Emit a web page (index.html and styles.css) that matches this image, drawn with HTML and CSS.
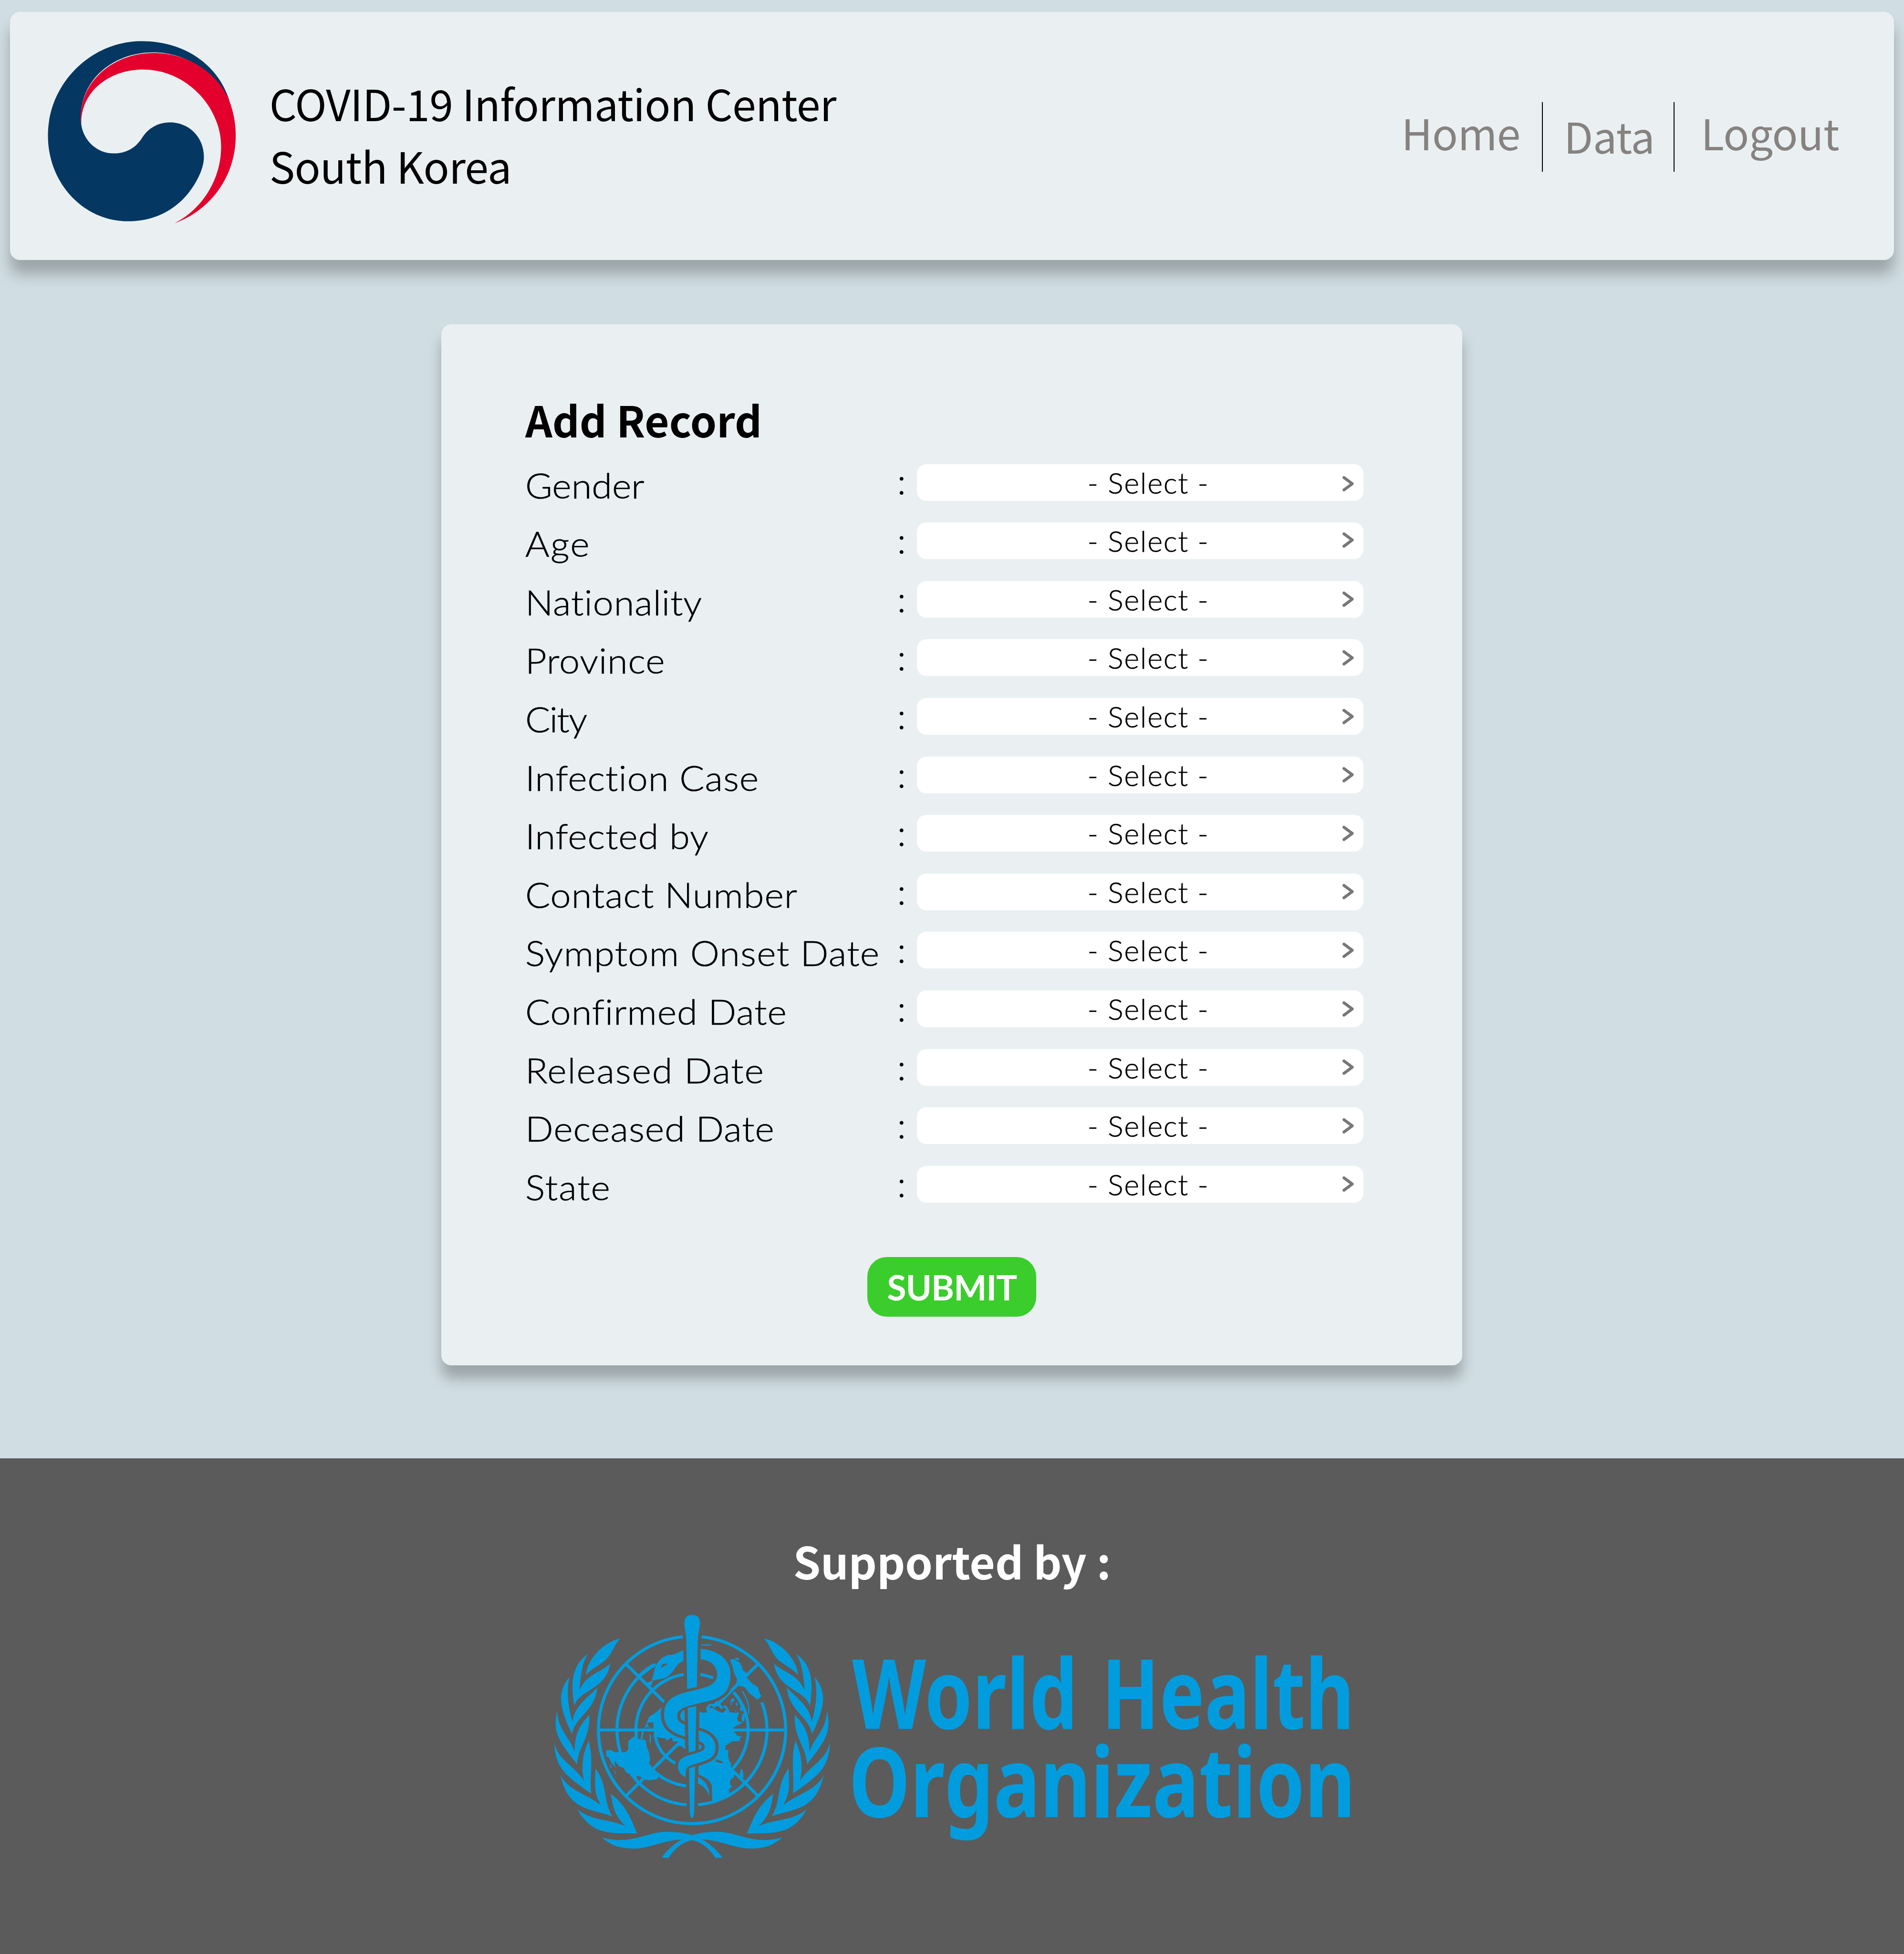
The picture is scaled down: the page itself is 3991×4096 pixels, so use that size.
FILE: index.html
```html
<!DOCTYPE html>
<html lang="en">
<head>
<meta charset="utf-8">
<title>COVID-19 Information Center South Korea</title>
<link rel="stylesheet" href="styles.css">
</head>
<body>
<header class="header">
  <svg class="crest" viewBox="0 0 1568 1568" preserveAspectRatio="none" aria-hidden="true">
    <path fill="#043762" d="M1418 545C1335 270 1085 95 775 95C400 95 89 420 89 810C89 1170 350 1459 675 1459C930 1459 1120 1310 1210 1080C1222 1045 1231 1010 1231 970C1231 820 1120 710 982 710C890 710 820 760 780 825C740 890 680 945 570 945C450 945 350 850 333 727C300 400 560 180 860 180C1100 180 1310 330 1418 545Z"/>
    <path fill="#e4002c" d="M333 727C297 430 545 184 865 184C1100 184 1310 320 1405 515C1440 600 1464 700 1464 810C1464 1110 1290 1370 1015 1475C1230 1360 1357 1130 1357 895C1357 590 1100 310 785 310C530 310 325 485 333 727Z"/>
  </svg>
  <h1 class="site-title">COVID-19 Information Center<br>South Korea</h1>
  <nav class="nav">
    <a class="nav-item nav-home">Home</a>
    <a class="nav-item nav-data">Data</a>
    <a class="nav-item nav-logout">Logout</a>
  </nav>
</header>

<main class="card">
  <h2 class="card-title">Add Record</h2>
  <div class="fields">
    <div class="field"><span class="label">Gender</span><span class="colon">:</span><div class="select">- Select -<svg class="chevron" viewBox="0 0 24 32"><path d="M3 3L20.500 16L3 29"/></svg></div></div>
    <div class="field"><span class="label">Age</span><span class="colon">:</span><div class="select">- Select -<svg class="chevron" viewBox="0 0 24 32"><path d="M3 3L20.500 16L3 29"/></svg></div></div>
    <div class="field"><span class="label">Nationality</span><span class="colon">:</span><div class="select">- Select -<svg class="chevron" viewBox="0 0 24 32"><path d="M3 3L20.500 16L3 29"/></svg></div></div>
    <div class="field"><span class="label">Province</span><span class="colon">:</span><div class="select">- Select -<svg class="chevron" viewBox="0 0 24 32"><path d="M3 3L20.500 16L3 29"/></svg></div></div>
    <div class="field"><span class="label">City</span><span class="colon">:</span><div class="select">- Select -<svg class="chevron" viewBox="0 0 24 32"><path d="M3 3L20.500 16L3 29"/></svg></div></div>
    <div class="field"><span class="label">Infection Case</span><span class="colon">:</span><div class="select">- Select -<svg class="chevron" viewBox="0 0 24 32"><path d="M3 3L20.500 16L3 29"/></svg></div></div>
    <div class="field"><span class="label">Infected by</span><span class="colon">:</span><div class="select">- Select -<svg class="chevron" viewBox="0 0 24 32"><path d="M3 3L20.500 16L3 29"/></svg></div></div>
    <div class="field"><span class="label">Contact Number</span><span class="colon">:</span><div class="select">- Select -<svg class="chevron" viewBox="0 0 24 32"><path d="M3 3L20.500 16L3 29"/></svg></div></div>
    <div class="field"><span class="label">Symptom Onset Date</span><span class="colon">:</span><div class="select">- Select -<svg class="chevron" viewBox="0 0 24 32"><path d="M3 3L20.500 16L3 29"/></svg></div></div>
    <div class="field"><span class="label">Confirmed Date</span><span class="colon">:</span><div class="select">- Select -<svg class="chevron" viewBox="0 0 24 32"><path d="M3 3L20.500 16L3 29"/></svg></div></div>
    <div class="field"><span class="label">Released Date</span><span class="colon">:</span><div class="select">- Select -<svg class="chevron" viewBox="0 0 24 32"><path d="M3 3L20.500 16L3 29"/></svg></div></div>
    <div class="field"><span class="label">Deceased Date</span><span class="colon">:</span><div class="select">- Select -<svg class="chevron" viewBox="0 0 24 32"><path d="M3 3L20.500 16L3 29"/></svg></div></div>
    <div class="field"><span class="label">State</span><span class="colon">:</span><div class="select">- Select -<svg class="chevron" viewBox="0 0 24 32"><path d="M3 3L20.500 16L3 29"/></svg></div></div>
  </div>
  <button class="submit" type="button">SUBMIT</button>
</main>

<footer class="footer">
  <p class="supported">Supported by :</p>
  <svg class="who" viewBox="0 0 1740 569">
    <svg x="0.3" y="0" width="673.4" height="568.7" viewBox="0 0 1568 1568" preserveAspectRatio="none">
      <defs>
        <g id="wreath">
          <path d="M414 228C350 240 255 330 246 440C270 405 310 385 340 355C380 310 380 270 414 228Z"/>
          <path d="M256 318C180 380 170 480 190 620C210 520 345 530 365 372C320 425 250 430 214 528C222 440 228 370 256 318Z"/>
          <path d="M166 450C105 540 115 620 178 780C200 670 290 650 302 512C250 575 190 620 180 710C160 620 150 540 166 450Z"/>
          <path d="M106 645C85 760 105 810 204 955C205 860 270 800 263 668C215 735 190 780 192 885C170 800 110 760 106 645Z"/>
          <path d="M92 825C95 980 150 1020 272 1125C264 1010 285 930 260 818C232 890 220 970 239 1055C200 970 105 930 92 825Z"/>
          <path d="M122 1017C160 1220 260 1210 375 1255C330 1170 355 1080 293 978C290 1080 285 1120 320 1193C260 1130 160 1110 122 1017Z"/>
          <path d="M204 1215C280 1370 370 1352 497 1355C470 1290 455 1205 368 1125C378 1200 385 1250 440 1312C360 1270 280 1285 204 1215Z"/>
          <path d="M323 1377C470 1425 540 1345 640 1345C780 1345 850 1400 913 1493L880 1497C850 1440 800 1388 728 1388C620 1392 560 1442 480 1442C400 1442 360 1415 323 1377Z"/>
        </g>
        <path id="coil-top" d="M806 288C890 292 952 350 952 435C952 520 925 563 850 588L780 608C720 625 692 640 692 675C692 705 710 718 730 726L730 795C670 775 628 740 628 670C628 590 665 560 735 538L800 520C860 503 887 480 887 435C887 385 850 350 806 348Z"/>
        <path id="coil-low" d="M797 758C850 775 879 810 879 855C879 905 860 925 810 942L765 958C740 968 735 980 733 1000L733 1030C705 1015 696 990 696 970C697 925 720 912 760 898L790 888C815 880 826 870 826 855C826 835 812 823 797 822Z"/>
        <path id="rod-a" d="M764 92C790 92 803 105 803 140C803 170 793 200 793 235L788 508L741 520L736 235C736 200 727 175 727 145C727 105 740 92 764 92Z"/>
        <path id="rod-b" d="M743 630L785 618L781 877L748 888Z"/>
        <path id="rod-c" d="M750 978L780 966L775 1225C775 1245 770 1265 764 1266C758 1265 754 1250 754 1225Z"/>
      </defs>
      <g class="who-fill">
        <use href="#wreath"/>
        <use href="#wreath" transform="translate(1529 0) scale(-1 1)"/>
      </g>
      <g class="who-ring" transform="translate(764.5 756.500) scale(1 1.184)">
        <path d="M45-454.800A457 457 0 1 1-45-454.800"/>
        <path d="M-178-320A366 366 0 0 0-26 365M340-135A366 366 0 0 1 28 365"/>
        <path d="M-38-271.300A274 274 0 0 0-28 272.600M38-271.300A274 274 0 0 1 104-253.500M203-184A274 274 0 0 1 190 197"/>
        <path d="M-181 20A181 181 0 0 0-80 163"/>
        <path d="M-455 0H-180M455 0H190M-323-323L-133-133M323-323L120-120M-323 323L-30 30M-60 60L-20 95M323 323L190 190"/>
      </g>
      <g class="who-fill">
        <path d="M580 370C550 385 520 415 500 440L512 452C545 425 555 410 568 402Z"/>
        <path d="M535 488L575 470L570 490L555 510L540 505Z"/>
        <path d="M790 640L805 652L818 657L838 655L834 640L848 630L862 628L895 650L915 658L930 640L938 625L948 655L995 657L990 672L984 690L990 708L1014 712L985 730L962 748L972 770L985 790L1010 796L998 802V820L960 822L940 838L926 850L928 872L942 872L940 905L946 935L955 948V985L972 1005L968 1030L952 1045L950 1070L960 1082L945 1100L946 1122C925 1145 895 1165 865 1172L862 1165V1090C862 1060 840 1030 793 1015V740Z"/>
        <path d="M640 590L612 630L588 655L555 680L545 710L532 748L548 738L558 746L575 745V712L580 790L600 800L635 805L640 820L652 808L665 800L672 825L690 820L705 835L690 850L712 850L730 868V640Z"/>
        <path d="M480 795L500 790V808L538 815L545 860L554 885L560 930L552 955L570 990L600 1020L596 1040L555 1048L525 1040L512 1025L492 1022L500 1042L465 1012L445 1005L430 975L412 970L385 935L390 975L370 945L358 915L346 910L345 875L370 872L385 885H410V875L422 885H440L453 870V820Z"/>
        <path d="M520 765H528L522 810H514ZM558 780L565 790L562 838L556 820ZM360 945L375 975H368ZM384 985L394 1010H388Z"/>
        <path d="M950 350L970 346L1000 370L1015 415L1028 422L1030 450L1055 485L1085 508L1098 555L1106 556L1085 582L1045 545L1020 508L985 500L960 540L948 530L975 500L985 465L970 430ZM972 342L990 338L994 356L984 352Z"/>
        <path d="M1003 978L1012 990L1016 1030L1005 1042L994 1010L1000 1005ZM808 262L858 262V269L808 269Z"/>
        <path d="M960 572L972 576L966 595H950ZM950 600L962 605L955 614ZM975 605L988 598L985 622ZM992 560L1002 585L1000 615L990 590ZM1005 600L1015 625L1008 650L998 640ZM1012 660L1025 665L1018 710L1005 700ZM972 635L985 645L975 650ZM915 618L925 612L942 630L935 640Z"/>
        <path d="M845 608L870 606L884 588L902 596L905 612L920 630L905 636L895 618L882 620L870 632L862 615L850 622L842 638L832 634Z"/>
      </g>
      <path class="who-line" d="M1010 532C1030 570 1048 620 1040 665"/>
      <path class="who-bg" d="M978 620L972 640L990 650ZM545 715L575 712V742L565 745L552 738ZM880 925L915 940V950L898 945L882 940Z"/>
      <g class="who-gap">
        <use href="#coil-top"/><use href="#coil-low"/>
        <use href="#rod-a"/><use href="#rod-b"/><use href="#rod-c"/>
        <path class="who-bg" d="M793 1020C845 1040 858 1100 856 1165L848 1140L793 1066Z"/>
      </g>
      <g class="who-fill">
        <path d="M727 640V700L720 694L716 700C706 690 706 665 712 655C715 648 720 643 727 640Z"/>
        <path d="M797 842C805 842 812 848 812 855C812 862 805 868 797 870L800 855Z"/>
        <path d="M793 1028C830 1050 852 1090 848 1140C838 1100 820 1080 793 1066Z"/>
        <path d="M722 295C710 300 700 308 685 316C670 323 655 322 640 326C605 345 590 375 583 400C578 430 572 450 568 470C600 465 630 460 648 445C675 420 685 385 705 368L722 358ZM612 400L620 375L646 373C638 385 625 388 612 400Z" fill-rule="evenodd"/>
        <use href="#coil-top"/><use href="#coil-low"/>
        <use href="#rod-a"/><use href="#rod-b"/><use href="#rod-c"/>
      </g>
    </svg>
    <g class="who-name">
      <text x="664" y="271.800" textLength="473" lengthAdjust="spacingAndGlyphs">World</text>
      <text x="1187" y="271.800" textLength="530" lengthAdjust="spacingAndGlyphs">Health</text>
      <text x="657" y="457.400" textLength="1062" lengthAdjust="spacingAndGlyphs">Organization</text>
    </g>
  </svg>
</footer>
</body>
</html>
```
FILE: styles.css
```css
* { box-sizing: border-box; }

body {
  margin: 0;
  height: 4096px;
  display: flex;
  flex-direction: column;
  background: #d0dde2;
  color: #000;
  font-family: "Noto Sans CJK KR", "Noto Sans", sans-serif;
  overflow: hidden;
}

.header {
  display: flex;
  align-items: flex-start;
  height: 519.5px;
  margin: 25px 21.5px 0 21px;
  background: #eaf0f2;
  border-radius: 21px;
  box-shadow: 0 30px 30px rgba(0, 0, 0, .25);
}

.crest {
  width: 448.9px;
  height: 434px;
  margin: 34.9px 0 0 53.8px;
}

.site-title {
  margin: 125px 0 0 41px;
  font-size: 89.6px;
  font-weight: 400;
  line-height: 131px;
  letter-spacing: -.65px;
  white-space: nowrap;
}

.nav {
  display: flex;
  margin: 189px 0 0 auto;
  width: 1032px;
}

.nav-item {
  height: 145.5px;
  color: #868280;
  font-size: 89.2px;
  letter-spacing: -.4px;
}
.nav-home { width: 294.5px; line-height: 126.5px; }
.nav-data { width: 275.5px; padding-left: 44px; border-left: 2.2px solid #000; line-height: 139.7px; }
.nav-logout { padding-left: 56px; border-left: 2.2px solid #000; line-height: 126.5px; }

.card {
  width: 2140.4px;
  height: 2182.5px;
  margin: 135px 0 0 925px;
  padding: 148.2px 0 0 176px;
  background: #eaf0f2;
  border-radius: 21px;
  box-shadow: 0 28px 28px rgba(0, 0, 0, .25);
}

.card-title {
  margin: 0 0 45px;
  font-size: 88.6px;
  font-weight: 700;
  line-height: 101px;
  height: 100px;
}

.fields {
  display: flex;
  flex-direction: column;
  gap: 45.6px;
}

.field {
  display: grid;
  grid-template-columns: 777px 44.4px 935.3px;
  height: 77px;
  font-family: Lato, sans-serif;
  white-space: nowrap;
}

.label {
  justify-self: start;
  font-size: 73px;
  font-weight: 300;
  line-height: 88px;
  letter-spacing: .9px;
  -webkit-text-stroke: .7px #000;
  transform: scaleX(1.06);
  transform-origin: 0 50%;
}
.field:nth-child(1) .label { letter-spacing: 0; }
.field:nth-child(2) .label { letter-spacing: 2.1px; }
.field:nth-child(5) .label { letter-spacing: -1.5px; }
.field:nth-child(9) .label { letter-spacing: 1.2px; }
.field:nth-child(11) .label { letter-spacing: 1.700px; }
.field:nth-child(13) .label { letter-spacing: 1.900px; }

.colon {
  padding-left: 3px;
  font-size: 73px;
  font-weight: 300;
  line-height: 74px;
  -webkit-text-stroke: 1px #000;
}
.field:first-child .colon { line-height: 70px; }

.select {
  display: flex;
  justify-content: space-between;
  height: 77px;
  padding: 0 20px 0 357px;
  background: #fff;
  border-radius: 20px;
  font-size: 61px;
  font-weight: 300;
  line-height: 78px;
  letter-spacing: 1.8px;
  -webkit-text-stroke: .6px #000;
}

.chevron {
  width: 24px;
  height: 32px;
  margin-top: 22.5px;
  fill: none;
  stroke: #777;
  stroke-width: 6;
  stroke-linecap: round;
  stroke-linejoin: round;
}
.field:nth-child(1) .chevron { margin-top: 25px; }
.field:nth-child(2) .chevron { margin-top: 20.500px; }

.submit {
  display: block;
  width: 354px;
  height: 125px;
  margin: 114.4px 0 0 717.4px;
  padding: 0;
  border: 0;
  border-radius: 41px;
  background: #3acd2b;
  color: #fff;
  font: 700 73px/127px Lato, sans-serif;
  letter-spacing: -.8px;
}

.footer {
  flex: 1;
  margin-top: 195.4px;
  padding-top: 164px;
  background: #5b5b5b;
}

.supported {
  margin: 0;
  color: #fff;
  font-size: 92.2px;
  font-weight: 700;
  line-height: 100px;
  text-align: center;
}

.who {
  display: block;
  width: 1740px;
  height: 569px;
  margin: 30.6px 0 0 1122px;
}
.who-fill { fill: #009cde; }
.who-ring { fill: none; stroke: #009cde; stroke-width: 15; }
.who-line { fill: none; stroke: #009cde; stroke-width: 6; }
.who-bg { fill: #5b5b5b; }
.who-gap { fill: #5b5b5b; stroke: #5b5b5b; stroke-width: 32; }
.who-gap .who-bg { stroke-width: 12; }
.who-name {
  fill: #009cde;
  font: 700 202.6px "Noto Sans", "Open Sans", sans-serif;
}
```
